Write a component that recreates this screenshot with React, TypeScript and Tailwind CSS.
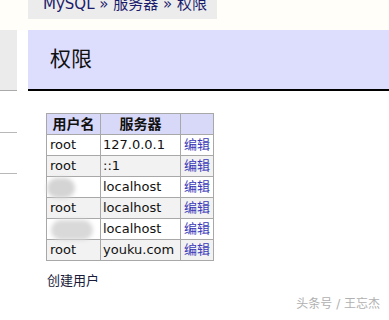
const FONT = 'font-["DejaVu_Sans","Noto_Sans_CJK_SC",sans-serif]'

type Row = { user: string; host: string; blur?: 'small' | 'wide' }

const rows: Row[] = [
  { user: 'root', host: '127.0.0.1' },
  { user: 'root', host: '::1' },
  { user: '', host: 'localhost', blur: 'small' },
  { user: 'root', host: 'localhost' },
  { user: '', host: 'localhost', blur: 'wide' },
  { user: 'root', host: 'youku.com' },
]

export default function App() {
  return (
    <div className={`relative h-[320px] w-[389px] overflow-hidden bg-white ${FONT} text-[13px]`}>
      <div className="flex h-[30px] flex-col bg-[#fffef8]">
        <div className="ml-[28px] h-[19px] w-[189px] overflow-hidden bg-[#ececec] pl-[15px]">
          <div className="-mt-[6px] text-[15px] leading-[20px] text-[#1c1c6c]">
            MySQL » 服务器 » 权限
          </div>
        </div>
      </div>

      <div className="flex h-[61px]">
        <div className="h-[61px] w-[17px] border-b border-[#aaaaaa] bg-[#ebebeb]" />
        <div className="w-[11px] bg-white" />
        <div className="flex flex-1 items-center border-b-2 border-black bg-[#ddddfd] pl-[22px]">
          <span className="text-[21px] text-[#111111]">权限</span>
        </div>
      </div>

      <div className="flex">
        <div className="flex w-[17px] flex-col">
          <div className="mt-[41px] h-px bg-[#b8b8b8]" />
          <div className="mt-[40px] h-px bg-[#b8b8b8]" />
        </div>
        <div className="ml-[29px] mt-[22px] flex flex-col">
          <table className="border-collapse border border-[#a8a8a8] text-[13px] leading-[20px]">
            <thead>
              <tr className="bg-[#d8d8f8] font-bold text-[#111111]">
                <th className="w-[54px] border border-[#a8a8a8] p-0 text-center text-[14px]">用户名</th>
                <th className="w-[80px] border border-[#a8a8a8] p-0 text-center text-[14px]">服务器</th>
                <th className="w-[33px] border border-[#a8a8a8] p-0" />
              </tr>
            </thead>
            <tbody>
              {rows.map((r, i) => (
                <tr key={i} className={i % 2 === 1 ? 'bg-[#f2f2f2]' : 'bg-white'}>
                  <td className="relative h-[21px] border border-[#a8a8a8] px-[3px] py-0 text-[#111111]">
                    {r.user}
                    {r.blur === 'small' ? (
                      <div className="absolute left-0 top-[1px] h-[20px] w-[28px] rounded-full bg-[#d4d4d4] blur-[2px]" />
                    ) : null}
                    {r.blur === 'wide' ? (
                      <div className="absolute left-[4px] top-[1px] h-[20px] w-[42px] rounded-full bg-[#d9d9d9] blur-[2px]" />
                    ) : null}
                  </td>
                  <td className="h-[21px] border border-[#a8a8a8] px-[2px] py-0 text-[#111111]">{r.host}</td>
                  <td className="h-[21px] border border-[#a8a8a8] px-[3px] py-0 text-[#3a3ab8]">编辑</td>
                </tr>
              ))}
            </tbody>
          </table>
          <div className="mt-[10px] pl-px text-[13px] text-[#1a1a3a]">创建用户</div>
        </div>
      </div>

      <div className="absolute right-[9px] top-[295px] text-[12px] text-[#b0b0b0]">头条号 / 王忘杰</div>
    </div>
  )
}
